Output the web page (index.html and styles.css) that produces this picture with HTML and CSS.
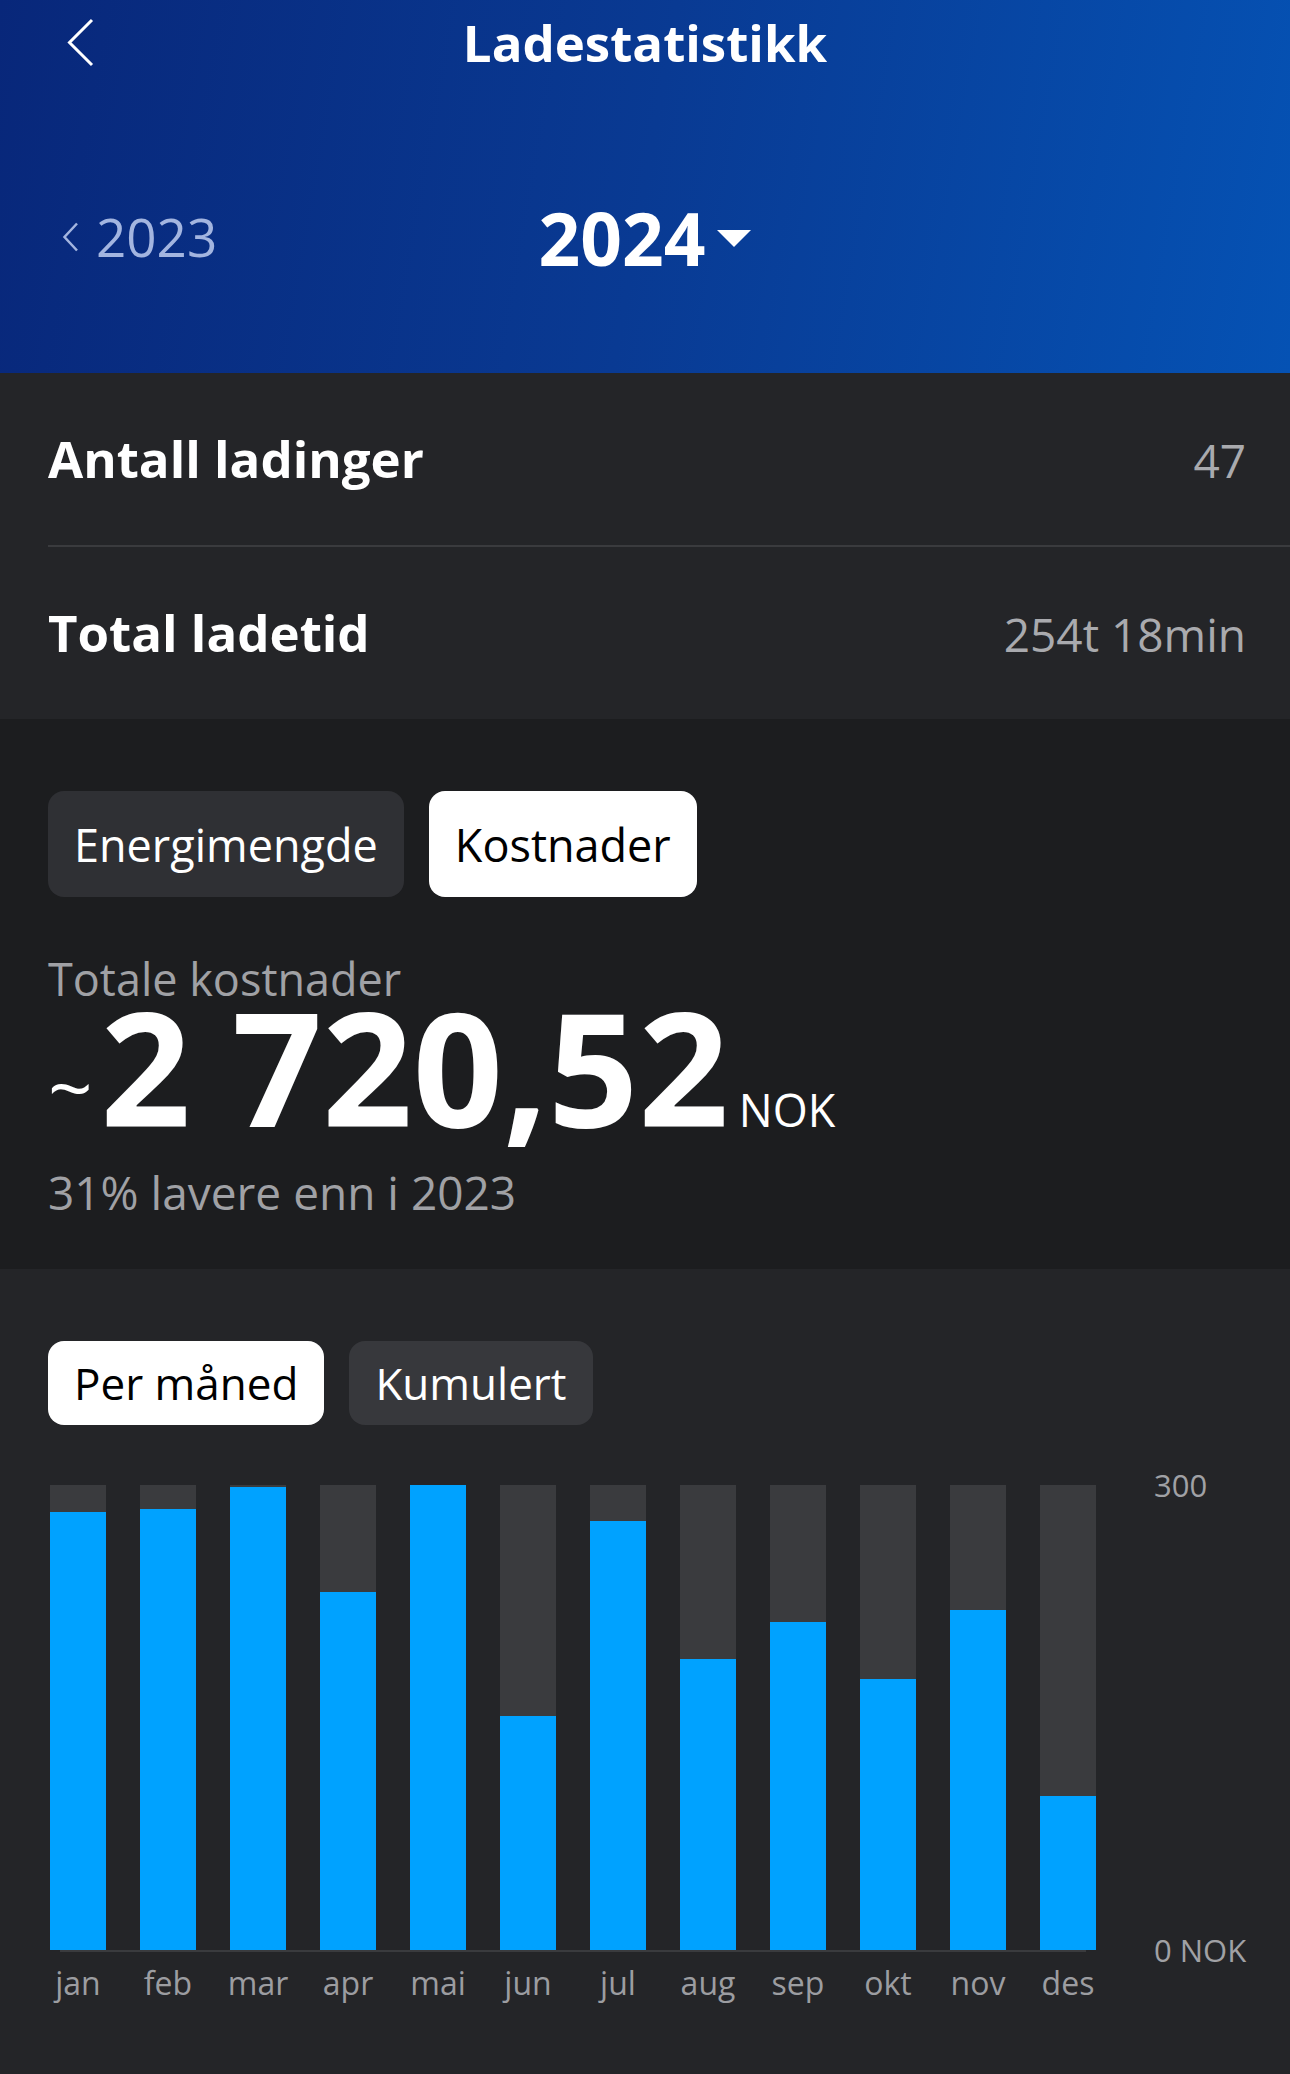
FILE: index.html
```html
<!DOCTYPE html>
<html lang="no">
<head>
    <meta charset="UTF-8">
    <meta name="viewport" content="width=device-width, initial-scale=1.0">
    <title>Ladestatistikk</title>
    <link rel="stylesheet" href="styles.css">
</head>
<body>
    <header class="header">
        <div class="topbar">
            <button class="back" aria-label="Tilbake">
                <svg width="28" height="49" viewBox="0 0 28 49"><path d="M26 2 L3.5 24.5 L26 47" fill="none" stroke="#fff" stroke-width="3"/></svg>
            </button>
            <h1 class="title">Ladestatistikk</h1>
            <span></span>
        </div>
        <div class="years">
            <div class="prev-year">
                <svg width="17" height="30" viewBox="0 0 17 30"><path d="M15 1.5 L2.5 15 L15 28.5" fill="none" stroke="#a3b5e0" stroke-width="2.5"/></svg>
                <span>2023</span>
            </div>
            <div class="current-year">
                <span>2024</span>
                <svg width="34" height="17" viewBox="0 0 34 17"><path d="M0 0 H34 L17 17 Z" fill="#fff"/></svg>
            </div>
            <span></span>
        </div>
    </header>

    <section class="summary">
        <div class="row">
            <span class="row-label">Antall ladinger</span>
            <span class="row-value">47</span>
        </div>
        <div class="row">
            <span class="row-label">Total ladetid</span>
            <span class="row-value">254t 18min</span>
        </div>
    </section>

    <section class="totals">
        <div class="tabs tabs-large">
            <button class="tab">Energimengde</button>
            <button class="tab active">Kostnader</button>
        </div>
        <div class="totals-label">Totale kostnader</div>
        <div class="amount-line"><span class="approx">~</span><span class="amount">2 720,52</span><span class="unit">NOK</span></div>
        <div class="totals-diff">31% lavere enn i 2023</div>
    </section>

    <section class="chart-section">
        <div class="tabs tabs-small">
            <button class="tab active">Per måned</button>
            <button class="tab">Kumulert</button>
        </div>
        <div class="chart">
            <div class="plot">
                <div class="tracks">
                    <div class="track"><div class="fill" style="height: 94.2%"></div></div>
                    <div class="track"><div class="fill" style="height: 94.9%"></div></div>
                    <div class="track"><div class="fill" style="height: 99.6%"></div></div>
                    <div class="track"><div class="fill" style="height: 77.1%"></div></div>
                    <div class="track"><div class="fill" style="height: 100%"></div></div>
                    <div class="track"><div class="fill" style="height: 50.4%"></div></div>
                    <div class="track"><div class="fill" style="height: 92.2%"></div></div>
                    <div class="track"><div class="fill" style="height: 62.6%"></div></div>
                    <div class="track"><div class="fill" style="height: 70.5%"></div></div>
                    <div class="track"><div class="fill" style="height: 58.3%"></div></div>
                    <div class="track"><div class="fill" style="height: 73.2%"></div></div>
                    <div class="track"><div class="fill" style="height: 33.1%"></div></div>
                </div>
                <div class="axis-line"></div>
                <div class="months">
                    <span>jan</span><span>feb</span><span>mar</span><span>apr</span>
                    <span>mai</span><span>jun</span><span>jul</span><span>aug</span>
                    <span>sep</span><span>okt</span><span>nov</span><span>des</span>
                </div>
            </div>
            <div class="y-axis">
                <span>300</span>
                <span>0 NOK</span>
            </div>
        </div>
    </section>
</body>
</html>
```

FILE: styles.css
```css
body {
    margin: 0;
    background-color: #242528;
    color: #fff;
    font-family: "Open Sans", "Noto Sans", sans-serif;
}
button {
    font-family: inherit;
    border: none;
    background: none;
    padding: 0;
    cursor: pointer;
}

/* header */
.header {
    height: 373px;
    box-sizing: border-box;
    padding-top: 12px;
    background: linear-gradient(100deg, #08277a 0%, #093a93 50%, #0552b4 100%);
}
.topbar {
    display: grid;
    grid-template-columns: 1fr auto 1fr;
    align-items: center;
    padding: 0 66px;
    height: 60px;
}
.back svg {
    display: block;
}
.title {
    margin: 0;
    font-size: 51px;
    line-height: 60px;
    font-weight: 700;
}
.years {
    display: grid;
    grid-template-columns: 1fr auto 1fr;
    align-items: center;
    margin-top: 121px;
    height: 90px;
}
.prev-year {
    display: flex;
    align-items: center;
    gap: 17px;
    padding-left: 62px;
    padding-bottom: 2px;
    color: #a3b5e0;
    font-size: 53px;
    line-height: 60px;
}
.current-year {
    display: flex;
    align-items: center;
    gap: 12px;
    font-size: 73px;
    line-height: 90px;
    font-weight: 700;
}

/* summary rows */
.summary {
    padding-left: 48px;
}
.row {
    display: flex;
    justify-content: space-between;
    align-items: baseline;
    padding: 55px 44px 55px 0;
    line-height: 60px;
}
.row:first-child {
    border-bottom: 2px solid #3a3b3e;
}
.row-label {
    font-size: 51px;
    font-weight: 700;
}
.row-value {
    font-size: 46px;
    color: #a9aaae;
}

/* tabs */
.tabs {
    display: flex;
    gap: 25px;
}
.tab {
    display: flex;
    align-items: center;
    padding: 0 26px;
    border-radius: 16px;
    font-size: 45px;
    color: #fff;
}
.tab.active {
    background-color: #fff;
    color: #000;
}
.tabs-large .tab {
    height: 106px;
    background-color: #2f3034;
}
.tabs-small .tab {
    height: 84px;
    font-size: 44px;
    background-color: #37383c;
}
.tabs .tab.active {
    background-color: #fff;
}

/* totals */
.totals {
    background-color: #1c1d1f;
    padding: 72px 48px 50px;
}
.totals-label,
.totals-diff {
    font-size: 45px;
    line-height: 54px;
    color: #a0a1a5;
}
.totals-label {
    margin-top: 55px;
}
.amount-line {
    font-size: 158px;
    line-height: 120px;
    font-weight: 700;
    white-space: nowrap;
}
.approx {
    font-size: 78px;
    font-weight: 400;
    line-height: 1;
    vertical-align: 10px;
    margin-right: 8px;
}
.unit {
    font-size: 45px;
    font-weight: 400;
    line-height: 1;
    margin-left: 10px;
}
.totals-diff {
    margin-top: 33px;
    font-size: 46px;
}

/* chart */
.chart-section {
    padding-top: 72px;
    padding-bottom: 60px;
}
.chart-section .tabs {
    padding-left: 48px;
}
.chart {
    display: flex;
    align-items: flex-start;
    margin-top: 60px;
    padding-left: 33px;
}
.tracks,
.months {
    display: grid;
    grid-template-columns: repeat(12, 90px);
    justify-items: center;
}
.tracks {
    height: 465px;
}
.track {
    width: 56px;
    height: 100%;
    display: flex;
    align-items: flex-end;
    background-color: #3a3b3e;
}
.fill {
    width: 100%;
    background-color: #00a2ff;
}
.axis-line {
    height: 2px;
    margin: 0 27px;
    background-color: #3a3b3e;
}
.months {
    margin-top: 11px;
    font-size: 32px;
    line-height: 40px;
    color: #9c9da1;
}
.y-axis {
    display: flex;
    flex-direction: column;
    justify-content: space-between;
    height: 495px;
    margin-top: -15px;
    margin-left: 41px;
    font-size: 31px;
    line-height: 30px;
    color: #a0a1a5;
}
```
